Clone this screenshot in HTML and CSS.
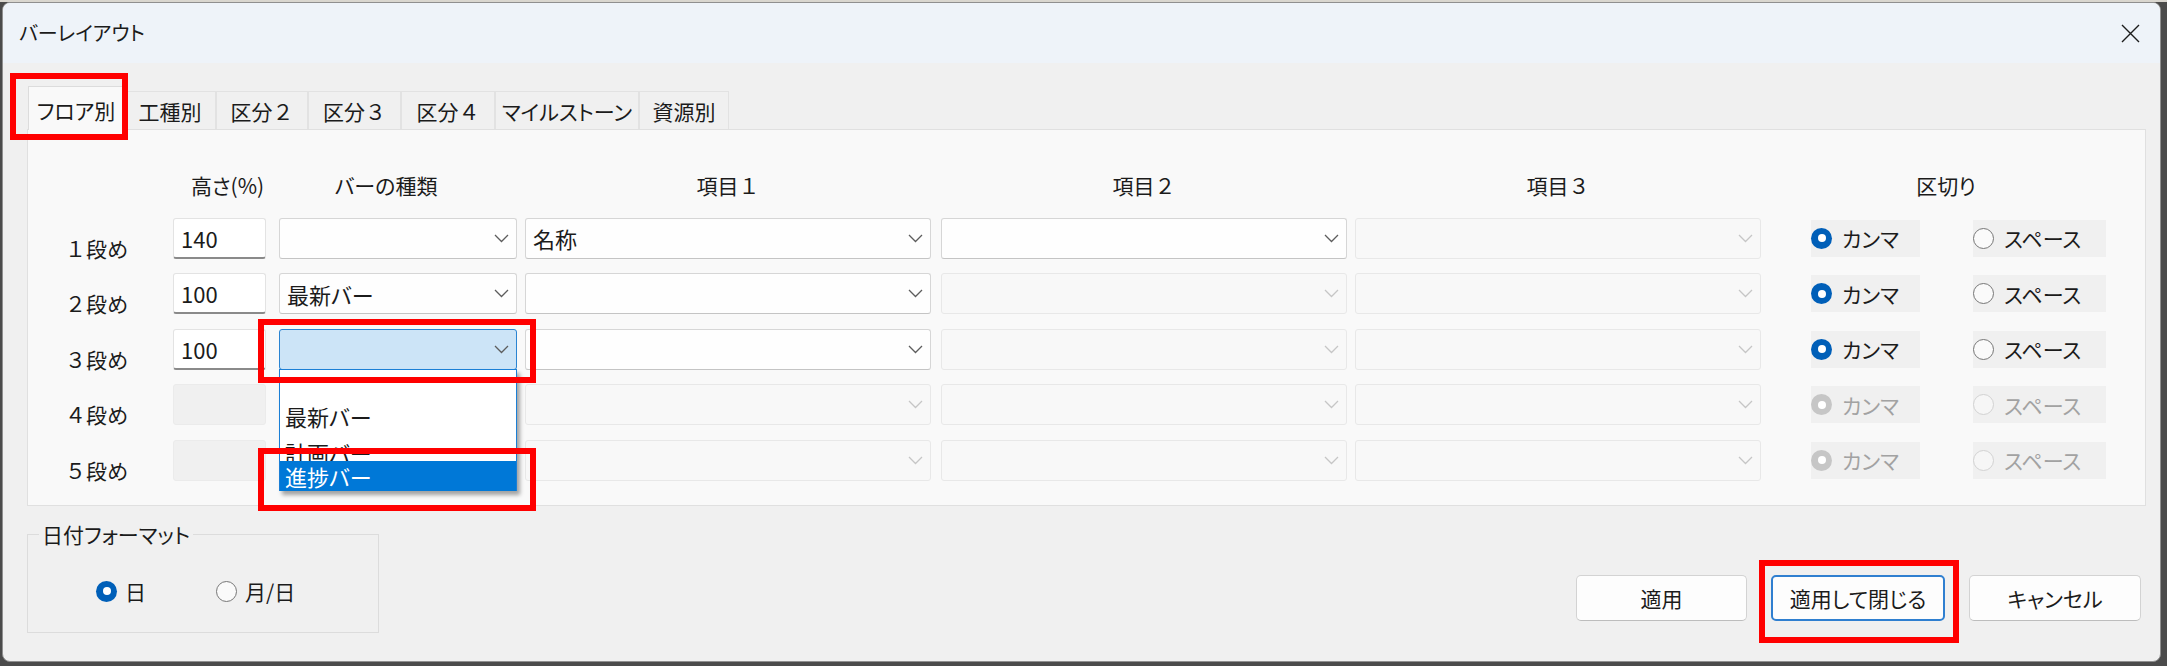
FILE: index.html
```html
<!DOCTYPE html>
<html lang="ja">
<head>
<meta charset="utf-8">
<title>バーレイアウト</title>
<link rel="stylesheet" href="styles.css">
</head>
<body>
<div class="window">
  <div class="titlebar">
    <span class="title">バーレイアウト</span>
    <svg class="close" width="19" height="19" viewBox="0 0 19 19"><path d="M1 1L18 18M18 1L1 18"/></svg>
  </div>
  <div class="content">
    <div class="tabs">
      <div class="tab active w96">フロア別</div>
      <div class="tab w92">工種別</div>
      <div class="tab w92">区分<span class="fw">２</span></div>
      <div class="tab w93">区分<span class="fw">３</span></div>
      <div class="tab w94">区分<span class="fw">４</span></div>
      <div class="tab w144">マイルストーン</div>
      <div class="tab w90">資源別</div>
    </div>
    <div class="panel">
      <div class="grid">
        <div></div>
        <div class="head h-num">高さ(%)</div>
        <div class="head h-type">バーの種類</div>
        <div class="head h-item">項目<span class="fw">１</span></div>
        <div class="head h-item">項目<span class="fw">２</span></div>
        <div class="head h-item">項目<span class="fw">３</span></div>
        <div class="head h-sep">区切り</div>

        <!-- row 1 -->
        <div class="rowlabel"><span class="fw">１</span>段め</div>
        <div class="num">140</div>
        <div class="combo type"><span></span><svg class="chev" width="15" height="9" viewBox="0 0 15 9"><path d="M1 1L7.5 7.5L14 1"/></svg></div>
        <div class="combo item"><span>名称</span><svg class="chev" width="15" height="9" viewBox="0 0 15 9"><path d="M1 1L7.5 7.5L14 1"/></svg></div>
        <div class="combo item"><span></span><svg class="chev" width="15" height="9" viewBox="0 0 15 9"><path d="M1 1L7.5 7.5L14 1"/></svg></div>
        <div class="combo item off"><span></span><svg class="chev" width="15" height="9" viewBox="0 0 15 9"><path d="M1 1L7.5 7.5L14 1"/></svg></div>
        <div class="rbox comma"><span class="rdot on"></span>カンマ</div>
        <div class="rbox space"><span class="rdot"></span>スペース</div>

        <!-- row 2 -->
        <div class="rowlabel"><span class="fw">２</span>段め</div>
        <div class="num">100</div>
        <div class="combo type"><span>最新バー</span><svg class="chev" width="15" height="9" viewBox="0 0 15 9"><path d="M1 1L7.5 7.5L14 1"/></svg></div>
        <div class="combo item"><span></span><svg class="chev" width="15" height="9" viewBox="0 0 15 9"><path d="M1 1L7.5 7.5L14 1"/></svg></div>
        <div class="combo item off"><span></span><svg class="chev" width="15" height="9" viewBox="0 0 15 9"><path d="M1 1L7.5 7.5L14 1"/></svg></div>
        <div class="combo item off"><span></span><svg class="chev" width="15" height="9" viewBox="0 0 15 9"><path d="M1 1L7.5 7.5L14 1"/></svg></div>
        <div class="rbox comma"><span class="rdot on"></span>カンマ</div>
        <div class="rbox space"><span class="rdot"></span>スペース</div>

        <!-- row 3 -->
        <div class="rowlabel"><span class="fw">３</span>段め</div>
        <div class="num">100</div>
        <div class="combo type focus"><span></span><svg class="chev" width="15" height="9" viewBox="0 0 15 9"><path d="M1 1L7.5 7.5L14 1"/></svg>
          <div class="dropdown">
            <div class="opt blank"></div>
            <div class="opt">最新バー</div>
            <div class="opt cut">計画バー</div>
            <div class="opt sel">進捗バー</div>
          </div>
        </div>
        <div class="combo item"><span></span><svg class="chev" width="15" height="9" viewBox="0 0 15 9"><path d="M1 1L7.5 7.5L14 1"/></svg></div>
        <div class="combo item off"><span></span><svg class="chev" width="15" height="9" viewBox="0 0 15 9"><path d="M1 1L7.5 7.5L14 1"/></svg></div>
        <div class="combo item off"><span></span><svg class="chev" width="15" height="9" viewBox="0 0 15 9"><path d="M1 1L7.5 7.5L14 1"/></svg></div>
        <div class="rbox comma"><span class="rdot on"></span>カンマ</div>
        <div class="rbox space"><span class="rdot"></span>スペース</div>

        <!-- row 4 -->
        <div class="rowlabel"><span class="fw">４</span>段め</div>
        <div class="num off"></div>
        <div class="combo type off"><span></span><svg class="chev" width="15" height="9" viewBox="0 0 15 9"><path d="M1 1L7.5 7.5L14 1"/></svg></div>
        <div class="combo item off"><span></span><svg class="chev" width="15" height="9" viewBox="0 0 15 9"><path d="M1 1L7.5 7.5L14 1"/></svg></div>
        <div class="combo item off"><span></span><svg class="chev" width="15" height="9" viewBox="0 0 15 9"><path d="M1 1L7.5 7.5L14 1"/></svg></div>
        <div class="combo item off"><span></span><svg class="chev" width="15" height="9" viewBox="0 0 15 9"><path d="M1 1L7.5 7.5L14 1"/></svg></div>
        <div class="rbox comma off"><span class="rdot on"></span>カンマ</div>
        <div class="rbox space off"><span class="rdot"></span>スペース</div>

        <!-- row 5 -->
        <div class="rowlabel"><span class="fw">５</span>段め</div>
        <div class="num off"></div>
        <div class="combo type off"><span></span><svg class="chev" width="15" height="9" viewBox="0 0 15 9"><path d="M1 1L7.5 7.5L14 1"/></svg></div>
        <div class="combo item off"><span></span><svg class="chev" width="15" height="9" viewBox="0 0 15 9"><path d="M1 1L7.5 7.5L14 1"/></svg></div>
        <div class="combo item off"><span></span><svg class="chev" width="15" height="9" viewBox="0 0 15 9"><path d="M1 1L7.5 7.5L14 1"/></svg></div>
        <div class="combo item off"><span></span><svg class="chev" width="15" height="9" viewBox="0 0 15 9"><path d="M1 1L7.5 7.5L14 1"/></svg></div>
        <div class="rbox comma off"><span class="rdot on"></span>カンマ</div>
        <div class="rbox space off"><span class="rdot"></span>スペース</div>
      </div>
    </div>
    <div class="footer">
      <fieldset class="group">
        <legend>日付フォーマット</legend>
        <div class="gradios">
          <div class="gradio"><span class="rdot on"></span>日</div>
          <div class="gradio"><span class="rdot"></span>月/日</div>
        </div>
      </fieldset>
      <div class="buttons">
        <div class="btn b1">適用</div>
        <div class="btn b2 default">適用して閉じる</div>
        <div class="btn b3">キャンセル</div>
      </div>
    </div>
  </div>
  <div class="mark m-tab"></div>
  <div class="mark m-combo"></div>
  <div class="mark m-list"></div>
  <div class="mark m-btn"></div>
</div>
</body>
</html>
```

FILE: styles.css
```css
* { box-sizing: border-box; }
html, body {
  margin: 0;
  padding: 0;
  width: 2167px;
  height: 666px;
  overflow: hidden;
}
body {
  background: linear-gradient(#d9d6cf 0 2px, #4b4b4b 2px);
  font-family: "Noto Sans CJK JP", "Noto Sans", sans-serif;
  font-feature-settings: "palt";
  color: #1b1b1b;
  font-size: 21px;
}
.fw { font-feature-settings: normal; }
.window {
  position: relative;
  margin: 2px 6px 0 2px;
  height: 660px;
  background: #f0f0f0;
  border: 1px solid #8f8f8f;
  border-radius: 8px;
  overflow: hidden;
}
.titlebar {
  height: 60px;
  background: #eef3f9;
  display: flex;
  align-items: center;
  justify-content: space-between;
  padding: 0 20px 0 16px;
}
.title { font-size: 20px; line-height: 1; }
.close path { stroke: #1c1c1c; stroke-width: 1.4; fill: none; }

.content { padding: 25px 14px 0 24px; }

.tabs {
  display: flex;
  align-items: flex-end;
  height: 42px;
  padding-left: 1px;
  position: relative;
  z-index: 2;
  margin-bottom: -1px;
}
.tab {
  height: 38px;
  background: #f0f0f0;
  border: 1px solid #e2e2e2;
  border-bottom: none;
  display: flex;
  align-items: center;
  justify-content: center;
  font-size: 21px;
  margin-bottom: 1px;
}
.tab.active {
  height: 44px;
  background: #f9f9f9;
  border-color: #dcdcdc;
  margin-bottom: 0;
  padding-top: 2px;
}
.w96 { width: 96px; }
.w92 { width: 92px; }
.w93 { width: 93px; }
.w94 { width: 94px; }
.w144 { width: 144px; }
.w90 { width: 90px; }

.panel {
  height: 377px;
  background: #f9f9f9;
  border: 1px solid #e0e0e0;
  padding: 37px 0 0 37px;
}
.grid {
  display: grid;
  grid-template-columns: 108px 106px 246px 416px 414px 456px 162px 133px;
  grid-template-rows: 36px repeat(5, 41px);
  row-gap: 14.5px;
  align-items: center;
}
.head { text-align: center; line-height: 1; font-size: 21px; }
.h-num { width: 93px; padding-left: 16px; }
.h-type { width: 238px; padding-right: 24px; }
.h-item { width: 406px; }
.h-sep { grid-column: span 2; width: 270px; }

.rowlabel {
  align-self: end;
  line-height: 1;
  font-size: 21px;
}
.num {
  width: 93px;
  height: 41px;
  background: #ffffff;
  border: 1px solid #e3e3e3;
  border-bottom: 2px solid #8a8a8a;
  border-radius: 3px;
  padding-left: 7px;
  line-height: 38px;
  font-size: 22px;
}
.num.off {
  background: #f0f0f0;
  border: 1px solid #ebebeb;
}
.combo {
  position: relative;
  height: 41px;
  background: #fefefe;
  border: 1px solid #d6d6d6;
  border-bottom-color: #c4c4c4;
  border-radius: 3px;
  display: flex;
  align-items: center;
  justify-content: space-between;
  padding: 0 7px 0 7px;
  font-size: 22px;
}
.combo.type { width: 238px; }
.combo.item { width: 406px; }
.combo.off {
  background: #f8f8f8;
  border-color: #e8e8e8;
}
.combo.focus {
  background: #cce4f7;
  border-color: #2a84d2;
}
.chev path { fill: none; stroke: #5d5d5d; stroke-width: 1.3; }
.combo.off .chev path { stroke: #c6c6c6; }

.dropdown {
  position: absolute;
  z-index: 5;
  top: 100%;
  left: -1px;
  right: -1px;
  height: 122px;
  background: #ffffff;
  border: 1px solid #1b7fd6;
  border-bottom: none;
  box-shadow: 3px 4px 4px rgba(0, 0, 0, 0.35);
  overflow: hidden;
}
.opt {
  height: 30px;
  line-height: 30px;
  padding-left: 5px;
  font-size: 22px;
  overflow: hidden;
}
.opt.blank { height: 31px; }
.opt.cut { padding-top: 6px; }
.opt.sel { background: #0078d7; color: #ffffff; }

.rbox {
  height: 37px;
  background: #f0f0f0;
  display: flex;
  align-items: center;
  gap: 10px;
  font-size: 21px;
}
.rbox.comma { width: 109px; }
.rbox.space { width: 133px; }
.rbox.off { color: #a2a2a2; }

.rdot {
  width: 21px;
  height: 21px;
  border-radius: 50%;
  border: 1.5px solid #777777;
  background: #fafafa;
  flex: none;
  position: relative;
}
.rdot.on {
  border: none;
  background: #005fb8;
}
.rdot.on::after {
  content: "";
  position: absolute;
  left: 6.5px;
  top: 6.5px;
  width: 8px;
  height: 8px;
  border-radius: 50%;
  background: #ffffff;
}
.rbox.off .rdot { border-color: #d2d2d2; background: #f6f6f6; }
.rbox.off .rdot.on { background: #c6c6c6; }

.footer {
  display: flex;
  justify-content: space-between;
  align-items: flex-start;
}
.group {
  margin: 16px 0 0 0;
  width: 352px;
  height: 111px;
  border: 1px solid #dcdcdc;
  padding: 0 0 0 11px;
  min-width: 0;
}
.group legend {
  padding: 0 3px;
  font-size: 21px;
  line-height: 24px;
}
.gradios {
  display: flex;
  align-items: center;
  margin-top: 33px;
  padding-left: 57px;
  gap: 70px;
}
.gradio {
  display: flex;
  align-items: center;
  gap: 8px;
  font-size: 21px;
  line-height: 24px;
}

.buttons {
  display: flex;
  gap: 24px;
  margin: 69px 5px 0 0;
}
.btn {
  height: 46px;
  background: #fdfdfd;
  border: 1px solid #d3d3d3;
  border-bottom-color: #bdbdbd;
  border-radius: 5px;
  display: flex;
  align-items: center;
  justify-content: center;
  font-size: 21px;
}
.btn.default { border: 2px solid #2f7fd0; }
.b1 { width: 171px; }
.b2 { width: 174px; }
.b3 { width: 172px; }

.mark {
  position: absolute;
  border: 6px solid #ff0000;
  z-index: 10;
}
.m-tab { left: 7px; top: 70px; width: 118px; height: 67px; }
.m-combo { left: 255px; top: 316px; width: 278px; height: 64px; }
.m-list { left: 255px; top: 445px; width: 278px; height: 63px; }
.m-btn { left: 1756px; top: 557px; width: 200px; height: 83px; }
```
